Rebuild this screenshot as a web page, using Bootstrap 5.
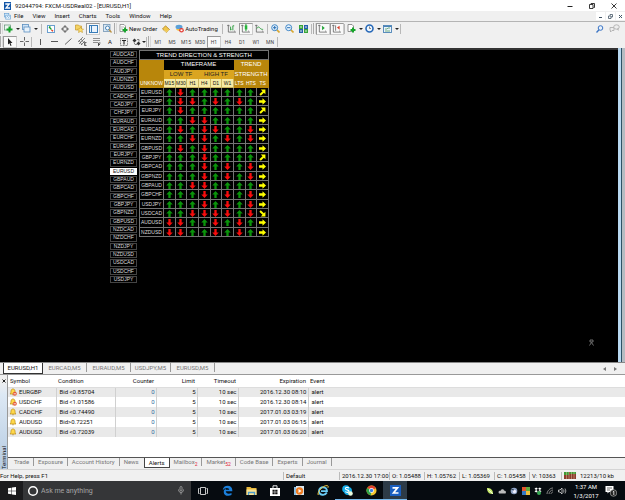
<!DOCTYPE html>
<html lang="en">
<head>
<meta charset="utf-8">
<meta name="viewport" content="width=device-width, initial-scale=1">
<title>92044794: FXCM-USDReal02 - [EURUSD,H1]</title>
<link href="https://cdn.jsdelivr.net/npm/bootstrap@5.3.0/dist/css/bootstrap.min.css" rel="stylesheet">
<style>
body{font-family:Roboto,"Liberation Sans",sans-serif;font-size:6px;line-height:8px;color:#111;background:#f0f0f0;min-height:100vh;white-space:nowrap;overflow-x:hidden}
button,input{font:inherit;color:inherit;border:0;background:none;padding:0;border-radius:0}
svg{display:block;flex:none}
a{color:inherit;text-decoration:none}
.titlebar{height:11px;background:#fff}
.menubar{height:11px;border-bottom:1px solid #b4b4b4}
.menubar nav{gap:9px;padding-left:3px}
.mdi button{width:9px;height:8px;background:#fff;margin-left:1px}
.toolrow{height:13px}
.grip{width:3px;height:11px;border-left:1px solid #aaa;border-right:1px solid #d8d8d8}
.divide{width:1px;height:10px;background:#b8b8b8;margin:0 2px}
.divide.tight{margin:0 1px 0 0}
.tool{width:14px;height:12px;display:flex;align-items:center;justify-content:center}
.tool.drop{width:18px;gap:3px}
.tool.drop.slim{width:15px;gap:1px}
.tool.worded{width:auto;padding:0 2px;gap:1px}
.tool.pressed{background:#f9f9f9;border:1px solid #ccc;border-top-color:#999;border-left-color:#999}
.tool.drop::after{content:"";border:2px solid transparent;border-top-color:#222;border-bottom:0}
.periods{color:#444;font-size:5px}
.chart{background:#000;border-top:2px solid #333;padding-left:110px;gap:2px}
.edge{width:7px;background:linear-gradient(90deg,#b8d8f0 3px,#2e5266 3px 4px,#b5bcc2 4px)}
.symbols{width:27px;height:233px;margin-top:1px;font:5px/6px "Liberation Sans",Arial,sans-serif;color:#ddd}
.symbols button{flex:1 1 0;min-height:0;background:#000;border:1px solid #444;margin-bottom:1px;line-height:5px}
.symbols button.on{background:#fff;color:#111;border-color:#fff}
.trend{width:130px;table-layout:fixed;border-collapse:collapse;font-family:"Liberation Sans",Arial,sans-serif;color:#fff;line-height:7px;text-align:center}
.trend th,.trend td{padding:0;border:1px solid #747474;font-weight:400;height:9px}
.trend tbody tr:nth-child(3n) td,.trend tbody tr:nth-child(3n) th{height:10px}
.trend tbody th{font-size:5px;color:#ddd}
.trend svg{margin:0 auto}
.trend thead tr:nth-child(2) th{height:10px}
.trend thead .plain{border-color:#000}
.trend thead .gold{background:#b8860b;border-color:#b8860b;vertical-align:bottom}
.trend thead .amber{background:#daa520;border-color:#daa520;color:#222}
.trend thead .cream{background:#f5e9a4;border-color:#c9b560;color:#111}
.trend thead .mid{vertical-align:middle}
.trend thead tr:last-child th,.trend thead .unk{font-size:5px}
.charttabs{height:13px;border-top:1px solid #888;border-bottom:1px solid #999;color:#777;padding-left:3px}
.charttabs button{width:44px;height:9px;border-right:1px solid #999}
.charttabs button.on{width:40px;height:11px;background:#fff;color:#111;border:1px solid #333;border-top:0}
.charttabs button.brief{width:40px}
.side{width:7px;background:linear-gradient(#f0f0f0 6px,#dce8f4 20px,#b6cbe2)}
.side span{writing-mode:vertical-rl;transform:rotate(180deg);line-height:7px}
.termbody{background:#fff;border-left:1px solid #999}
.alerts{table-layout:fixed;width:100%;border-collapse:collapse}
.alerts th{font-weight:400;height:12px;padding:0 2px;border-bottom:1px solid #ddd}
.alerts td{height:10px;padding:0 1px 0 3px;border-right:1px solid #d0d0d0;line-height:8px}
.alerts td:first-child{padding-left:1px}
.alerts .sym{gap:2px}
.alerts td:last-child{border-right:0}
.alerts tbody tr:nth-child(odd){background:#e9e9e9}
.alerts .zero{color:#2e6c9c}
.termtabs{height:12px;background:#f0f0f0;border-top:1px solid #555;color:#777;padding-left:2px}
.termtabs button{padding:0 4px;height:8px;border-right:1px solid #999}
.termtabs button.on{background:#fff;color:#111;border:1px solid #444;border-top:0;height:10px}
.termtabs button.bare{border-right-color:transparent}
.termtabs sub{color:#e02030;font-size:5px;bottom:-2px}
.status{height:12px;border-top:1px solid #d5d5d5}
.status span{border-left:1px solid #bbb;padding-left:2px}
.w-prof{width:56px}.w-date{width:50px}.w-px{width:35px}.w-vol{width:32px}.w-net{width:64px}
.taskbar{height:19px;background:#060b10;color:#fff}
.start{width:23px;height:19px;background:#1b1b1d}
.ask{width:168px;height:19px;background:#353638;color:#a5a5a5;font-size:7px;padding:0 7px 0 4px;gap:2px}
.ask input{min-width:0;outline:0}
.ask input::placeholder{color:#a5a5a5;opacity:1}
.app{width:24px;height:19px;display:flex;align-items:center;justify-content:center}
.app.open{border-bottom:1px solid #76b9ed}
.app.on{background:#2d3b47}
.clock{width:30px;line-height:9px}
.tray{gap:4px}
</style>
<script src="https://cdn.jsdelivr.net/npm/bootstrap@5.3.0/dist/js/bootstrap.bundle.min.js"></script>
</head>
<body class="d-flex flex-column m-0">
<svg width="0" height="0" class="position-absolute" aria-hidden="true">
<symbol id="up" viewBox="0 0 6 6"><path d="M3 0L5.800 3H4v3H2V3H.2z" fill="#0a940a"/></symbol>
<symbol id="dn" viewBox="0 0 6 6"><path d="M3 6L5.800 3H4V0H2v3H.2z" fill="#f80c0c"/></symbol>
<symbol id="rt" viewBox="0 0 6 6"><path d="M6 3L3 .2V2H0v2h3v1.800z" fill="#ff0"/></symbol>
<symbol id="ne" viewBox="0 0 6 6"><path d="M5.500.5v4L4.200 3.200 1.500 5.800.3 4.600 3 1.900 1.500.5z" fill="#ff0"/></symbol>
<symbol id="se" viewBox="0 0 6 6"><path d="M5.500 5.500v-4L4.200 2.800 1.500.2.3 1.400 3 4.100 1.500 5.500z" fill="#ff0"/></symbol>
<symbol id="bell" viewBox="0 0 8 8"><path d="M1 6c1-1 .8-1.500 1-3C2.200 1.500 3 1.200 3.500 1h1C5 1.200 5.800 1.500 6 3c.2 1.500 0 2 1 3z" fill="#ffd84a" stroke="#b98a14" stroke-width=".7"/><path d="M3 6.500h2L4 7.600z" fill="#a87910"/></symbol>
<symbol id="bars" viewBox="0 0 10 10"><path d="M1.500 1v8H9.500M0 2.500L1.500 1 3 2.500M8 7.500L9.500 9" fill="none" stroke="#666" stroke-width=".9"/></symbol>
</svg>

<header class="titlebar d-flex align-items-center">
<svg class="mx-1" width="7" height="8" viewBox="0 0 7 8"><rect width="7" height="8" fill="#1457a8"/><path d="M1.300 2h4L2 6h4" fill="none" stroke="#fff" stroke-width="1.300"/></svg>
<span>92044794: FXCM-USDReal02 - [EURUSD,H1]</span>
<div class="ms-auto d-flex pe-1">
<button class="tool me-2" aria-label="Minimize"><svg width="6" height="6"><path d="M.5 3.500h5" stroke="#222"/></svg></button>
<button class="tool me-2" aria-label="Restore"><svg width="6" height="6"><path d="M.5 1.500h3.500v4H.5zM2 1V.5h3.500v4H4.500" fill="none" stroke="#222" stroke-width=".9"/></svg></button>
<button class="tool" aria-label="Close"><svg width="6" height="6"><path d="M.5.5l5 5M5.500.5l-5 5" stroke="#222" stroke-width=".9"/></svg></button>
</div>
</header>

<div class="menubar d-flex align-items-center">
<svg class="ms-1" width="7" height="7" viewBox="0 0 8 8"><rect x=".5" y=".5" width="5" height="4" fill="#d9ecfa" stroke="#6ba4d6" stroke-width=".8"/><rect x="2" y="2.500" width="5.500" height="4.500" fill="#edf6fd" stroke="#6ba4d6" stroke-width=".8"/><path d="M3 5l1-1 1 1 1.500-1" stroke="#388bd0" fill="none" stroke-width=".7"/></svg>
<nav class="d-flex"><a href="#">File</a><a href="#">View</a><a href="#">Insert</a><a href="#">Charts</a><a href="#">Tools</a><a href="#">Window</a><a href="#">Help</a></nav>
<div class="mdi ms-auto d-flex">
<button aria-label="Minimize chart"><svg class="mx-auto" width="5" height="5"><path d="M1 3.500h3" stroke="#456"/></svg></button>
<button aria-label="Restore chart"><svg class="mx-auto" width="5" height="5"><path d="M.5 2h2.500v2.500H.5zM2 1.500V.5h2.500V3H3" fill="none" stroke="#456" stroke-width=".8"/></svg></button>
<button aria-label="Close chart"><svg class="mx-auto" width="5" height="5"><path d="M1 1l3 3M4 1L1 4" stroke="#456"/></svg></button>
</div>
</div>

<div class="toolrow d-flex align-items-center">
<i class="grip"></i>
<button class="tool drop" aria-label="New chart"><svg width="9" height="9" viewBox="0 0 9 9"><rect x=".5" y="1" width="6" height="5" fill="#eef6f0" stroke="#5d8f71" stroke-width=".7"/><path d="M5.500 2.500v6M2.500 5.500h6" stroke="#16a32a" stroke-width="2"/></svg></button>
<button class="tool drop" aria-label="Profiles"><svg width="9" height="9" viewBox="0 0 9 9"><rect x=".5" y=".5" width="6" height="5" fill="#cfe3f6" stroke="#5b8fc0" stroke-width=".8"/><rect x="2" y="3" width="6" height="5" fill="#e8f2fb" stroke="#5b8fc0" stroke-width=".8"/></svg></button>
<i class="divide"></i>
<button class="tool" aria-label="Market Watch"><svg width="8" height="8" viewBox="0 0 8 8"><rect x=".5" y=".5" width="7" height="7" fill="#fff" stroke="#6a9fcf"/><path d="M2 2l2.500 2.500M2 2h1.500" stroke="#18a030" stroke-width="1.300"/><path d="M4.500 5l1.500 1.300" stroke="#e03a20" stroke-width="1.400"/></svg></button>
<button class="tool" aria-label="Data Window"><svg width="8" height="8"><circle cx="4" cy="4" r="2.500" fill="none" stroke="#555" stroke-width=".8"/><path d="M4 0v3M4 5v3M0 4h3M5 4h3" stroke="#555" stroke-width=".8"/></svg></button>
<button class="tool" aria-label="Navigator"><svg width="9" height="9" viewBox="0 0 9 9"><path d="M.5 1h3l1 1h2v4h-6z" fill="#f4d364" stroke="#c59a2c" stroke-width=".7"/><path d="M5.500 3.200l1 1.700 2 .2-1.400 1.400.4 2-2-1-2 1 .4-2L2.500 5.100l2-.2z" fill="#ffe070" stroke="#c59a2c" stroke-width=".6"/></svg></button>
<button class="tool pressed" aria-label="Terminal"><svg width="9" height="8"><rect x=".5" y=".5" width="8" height="7" fill="#e9f3fc" stroke="#397db9"/><path d="M2.500 1v6" stroke="#397db9"/></svg></button>
<button class="tool" aria-label="Strategy Tester"><svg width="9" height="9"><rect x=".5" y=".5" width="6.500" height="7" fill="#dbe9f5" stroke="#7596b3" stroke-width=".8"/><circle cx="4.500" cy="4" r="2" fill="#fff" stroke="#4784b8"/><path d="M6 5.500L8.500 8.500" stroke="#bb9140" stroke-width="1.200"/></svg></button>
<i class="grip"></i>
<button class="tool worded"><svg width="9" height="9" viewBox="0 0 9 9"><path d="M1 .5h4l1.500 1.500v5.500H1z" fill="#fff" stroke="#777" stroke-width=".7"/><path d="M2 3h3M2 5h2" stroke="#888" stroke-width=".6"/><path d="M6 3.500v5M3.500 6h5" stroke="#16a32a" stroke-width="1.800"/></svg>New Order</button>
<button class="tool" aria-label="MetaEditor"><svg width="8" height="8"><path d="M.5 4L3.500.8l4 3.700L4.500 7.500z" fill="#f1c74c" stroke="#b38420" stroke-width=".8"/><path d="M2 5.500L4.500 7l2.500-2" stroke="#fff0b0" stroke-width=".6" fill="none"/></svg></button>
<button class="tool worded"><svg width="9" height="9"><ellipse cx="4" cy="3" rx="3.500" ry="2.300" fill="#5ba0d8"/><path d="M1 5c1 2 4 3 6 0" fill="#efc348"/><circle cx="6.500" cy="6.300" r="2.300" fill="#e3342c"/><rect x="5.500" y="5.400" width="2" height="1.800" fill="#fff"/></svg>AutoTrading</button>
<i class="divide"></i>
<button class="tool" aria-label="Bar chart"><svg width="9" height="9" viewBox="0 0 10 10"><use href="#bars"/><path d="M4 3v4M6.500 2v5M6.500 2H8M4 6h1" stroke="#239a35" fill="none"/></svg></button>
<button class="tool pressed" aria-label="Candlesticks"><svg width="9" height="9" viewBox="0 0 10 10"><use href="#bars"/><path d="M5.500 0v8" stroke="#148b28"/><rect x="4.200" y="1.500" width="2.800" height="4.500" fill="#26b53b"/></svg></button>
<button class="tool" aria-label="Line chart"><svg width="9" height="9" viewBox="0 0 10 10"><use href="#bars"/><path d="M2 5c2-3 3-1 4 0s2 1 3 1" stroke="#239a35" fill="none"/></svg></button>
<i class="divide tight"></i>
<button class="tool" aria-label="Zoom in"><svg width="9" height="9"><path d="M5.500 5.500l3 3" stroke="#d7a62e" stroke-width="1.600"/><circle cx="3.700" cy="3.700" r="3" fill="#e6f3fd" stroke="#4086c6"/><path d="M2 3.700h3.400M3.700 2v3.400" stroke="#2a6fb5"/></svg></button>
<button class="tool" aria-label="Zoom out"><svg width="9" height="9"><path d="M5.500 5.500l3 3" stroke="#d7a62e" stroke-width="1.600"/><circle cx="3.700" cy="3.700" r="3" fill="#e6f3fd" stroke="#4086c6"/><path d="M2 3.700h3.400" stroke="#2a6fb5"/></svg></button>
<button class="tool" aria-label="Tile windows"><svg width="9" height="8"><path d="M0 0h4v4H0zM5 4h4v4H5z" fill="#38a53a"/><path d="M5 0h4v4H5zM0 4h4v4H0z" fill="#275fae"/><path d="M1 2h2M6 2h2M1 6h2M6 6h2" stroke="#dff0df"/></svg></button>
<i class="divide tight"></i><i class="grip"></i>
<button class="tool pressed" aria-label="Auto scroll"><svg width="9" height="9" viewBox="0 0 10 10"><use href="#bars"/><path d="M4.500 2v5l3-2.500z" fill="#26a53b"/></svg></button>
<button class="tool pressed" aria-label="Chart shift"><svg width="9" height="9" viewBox="0 0 10 10"><use href="#bars"/><path d="M4 1.500v6" stroke="#777"/><path d="M8.500 2v4.500L5.500 4z" fill="#d8402c"/></svg></button>
<i class="divide tight"></i>
<button class="tool drop" aria-label="Indicators"><svg width="9" height="9" viewBox="0 0 9 9"><path d="M1 .5h4l1.500 1.500v5.500H1z" fill="#fff" stroke="#777" stroke-width=".8"/><path d="M6 3.500v5M3.500 6h5" stroke="#16a32a" stroke-width="2"/></svg></button>
<button class="tool drop" aria-label="Periods"><svg width="9" height="9"><circle cx="4.500" cy="4.500" r="3.500" fill="#eef6fd" stroke="#2668b8" stroke-width="1.600"/><path d="M4.500 2.500v2h1.500" fill="none" stroke="#555" stroke-width=".7"/></svg></button>
<button class="tool drop" aria-label="Templates"><svg width="9" height="8"><rect x=".5" y=".5" width="8" height="7" fill="#eaf3fb" stroke="#4b83b6" stroke-width=".9"/><path d="M.5 1.500h8" stroke="#4b83b6"/><path d="M2 4h2l1-1h2M2 6h5" stroke="#3c9151" stroke-width=".7" fill="none"/></svg></button>
<i class="divide tight"></i>
<div class="ms-auto d-flex pe-1">
<button class="tool" aria-label="Search"><svg width="8" height="8"><circle cx="4.500" cy="3" r="2.300" fill="#e8f1fb" stroke="#3b74c4"/><path d="M3 4.700L.5 7.500" stroke="#3b74c4" stroke-width="1.300"/></svg></button>
<button class="tool" aria-label="Chat"><svg width="11" height="9"><path d="M1 3.500h4v3H3L1.500 8V6.500H1z" fill="#eee" stroke="#aaa" stroke-width=".8"/><ellipse cx="7.500" cy="3" rx="2.800" ry="2.200" fill="#eee" stroke="#aaa" stroke-width=".8"/><path d="M8 5l1.500 2V4.500" fill="#aaa"/></svg></button>
</div>
</div>

<div class="toolrow d-flex align-items-center">
<i class="grip"></i>
<button class="tool pressed" aria-label="Cursor"><svg width="6" height="8"><path d="M1 0v6.500l1.500-1.300L3.500 8l1-.5-1-2.500H5.500z" fill="#222"/></svg></button>
<button class="tool" aria-label="Crosshair"><svg width="9" height="9"><path d="M4.500 0v3.500M4.500 5.500V9M0 4.500h3.500M5.500 4.500H9" stroke="#666"/></svg></button>
<i class="divide tight"></i>
<button class="tool" aria-label="Vertical line"><svg width="3" height="8"><path d="M1.500 1v6" stroke="#555"/></svg></button>
<button class="tool" aria-label="Horizontal line"><svg width="7" height="3"><path d="M0 1.500h7" stroke="#555"/></svg></button>
<button class="tool" aria-label="Trendline"><svg width="7" height="7"><path d="M0 6.500L6.500.5" stroke="#555" stroke-width=".9"/></svg></button>
<button class="tool" aria-label="Equidistant channel"><svg width="9" height="9"><path d="M0 5l5-5M1 7l6-6M3 8l4-4M1 3l3 5M3 2l3 4" stroke="#555" stroke-width=".7"/><path d="M8.500 5.500h-2v3h2M6.500 7h1.500" fill="none" stroke="#333" stroke-width=".7"/></svg></button>
<button class="tool" aria-label="Fibonacci"><svg width="9" height="9"><path d="M1 1.500h7M1 3.500h7M1 5.500h5" stroke="#777" stroke-width=".8"/><path d="M6.500 9V6h2M6.500 7.500h1.500" fill="none" stroke="#333" stroke-width=".8"/></svg></button>
<button class="tool" aria-label="Text">A</button>
<button class="tool" aria-label="Text label"><svg width="8" height="8"><rect x=".5" y=".5" width="7" height="7" fill="none" stroke="#777" stroke-dasharray="1 .6"/><path d="M2 2.500h4M4 2.500V6.500" stroke="#222" stroke-width="1.100"/></svg></button>
<button class="tool drop slim" aria-label="Arrows"><svg width="9" height="8"><path d="M2.500.5l2 2-2 2-2-2zM6.500 3.500l2 2-2 2-2-2z" fill="#333"/><path d="M2 4.500l1 2h2M5 1.500h2v2" stroke="#555" fill="none" stroke-width=".7"/></svg></button>
<i class="divide tight"></i><i class="grip"></i>
<div class="periods d-flex">
<button class="tool">M1</button><button class="tool">M5</button><button class="tool">M15</button><button class="tool">M30</button><button class="tool pressed">H1</button><button class="tool">H4</button><button class="tool">D1</button><button class="tool">W1</button><button class="tool">MN</button>
</div>
<i class="divide tight"></i>
</div>

<main class="d-flex flex-grow-1">
<div class="chart d-flex flex-grow-1 align-items-start">
<div class="symbols d-flex flex-column" id="symbols"></div>
<table class="trend">
<colgroup><col style="width:24px"><col><col><col><col><col><col><col><col><col></colgroup>
<thead>
<tr><th colspan="10">TREND DIRECTION &amp; STRENGTH</th></tr>
<tr><th class="gold unk" rowspan="3">UNKNOW</th><th class="plain" colspan="6">TIMEFRAME</th><th class="gold mid" colspan="3">TREND</th></tr>
<tr><th class="amber" colspan="3">LOW TF</th><th class="amber" colspan="3">HIGH TF</th><th class="gold mid" colspan="3">STRENGTH</th></tr>
<tr><th class="cream">M15</th><th class="cream">M30</th><th class="cream">H1</th><th class="cream">H4</th><th class="cream">D1</th><th class="cream">W1</th><th class="gold">LTS</th><th class="gold">HTS</th><th class="gold">TS</th></tr>
</thead>
<tbody id="trend"></tbody>
</table>
<svg class="ms-auto me-4 mt-auto mb-3" width="5" height="7"><path d="M.5 6.500l2-3 2 3M1 1h3v2H1z" fill="none" stroke="#888" stroke-width=".8"/></svg>
</div>
<div class="edge"></div>
</main>

<div class="charttabs d-flex">
<button class="on">EURUSD,H1</button><button>EURCAD,M5</button><button>EURAUD,M5</button><button class="brief">USDJPY,M5</button><button>EURUSD,M5</button>
<span class="ms-auto pe-2 d-flex align-items-center gap-2"><svg width="3" height="4"><path d="M3 0v4L0 2z" fill="#777"/></svg><svg width="3" height="4"><path d="M0 0v4l3-2z" fill="#777"/></svg></span>
</div>

<section class="d-flex">
<div class="side d-flex flex-column align-items-center justify-content-between pt-1"><svg width="4" height="4"><path d="M.5.5l3 3M3.500.5l-3 3" stroke="#222"/></svg><span>Terminal</span></div>
<div class="termbody flex-grow-1 d-flex flex-column">
<table class="alerts">
<colgroup><col style="width:48px"><col style="width:59px"><col style="width:41px"><col style="width:41px"><col style="width:41px"><col style="width:70px"><col></colgroup>
<thead><tr><th>Symbol</th><th>Condition</th><th class="text-end">Counter</th><th class="text-end">Limit</th><th class="text-end">Timeout</th><th class="text-end">Expiration</th><th>Event</th></tr></thead>
<tbody id="alerts"></tbody>
</table>
<div class="pt-3 mt-1"></div>
<div class="termtabs d-flex">
<button>Trade</button><button>Exposure</button><button>Account History</button><button class="bare">News</button><button class="on">Alerts</button><button>Mailbox<sub>2</sub></button><button>Market<sub>52</sub></button><button>Code Base</button><button>Experts</button><button>Journal</button>
</div>
</div>
</section>

<footer class="status d-flex align-items-center">
<div class="flex-grow-1">For Help, press F1</div>
<span class="w-prof">Default</span><span class="w-date">2016.12.30 17:00</span><span class="w-px">O: 1.05488</span><span class="w-px">H: 1.05762</span><span class="w-px">L: 1.05369</span><span class="w-px">C: 1.05458</span><span class="w-vol">V: 10363</span>
<span class="w-net d-flex align-items-center"><svg class="me-1" width="12" height="7"><rect width="12" height="7" fill="#8c3a2c"/><path d="M0 0h5v3H0zM6 0h6v2H6z" fill="#3f9a35"/><path d="M2.500 0v7M5 0v7M7.500 0v7M10 0v7" stroke="#d9c9a0" stroke-width=".5"/></svg>12213/10 kb</span>
</footer>

<div class="taskbar d-flex align-items-center">
<button class="start d-flex align-items-center justify-content-center" aria-label="Start"><svg width="8" height="8"><path d="M0 1.200L3.500.7v3H0zM4 .6L8 0v3.700H4zM0 4.200h3.500v3L0 6.800zM4 4.200h4V8L4 7.400z" fill="#fff"/></svg></button>
<label class="ask d-flex align-items-center"><svg width="12" height="12"><circle cx="6" cy="6" r="4.300" fill="none" stroke="#fff" stroke-width="1.500"/></svg><input class="flex-grow-1" type="text" placeholder="Ask me anything" aria-label="Ask me anything"><svg width="6" height="9"><rect x="2" y=".5" width="2" height="4.500" rx="1" fill="none" stroke="#aaa" stroke-width=".8"/><path d="M.5 3.500c0 4 5 4 5 0M3 6.500v2" fill="none" stroke="#aaa" stroke-width=".8"/></svg></label>
<button class="app" aria-label="Task view"><svg width="10" height="8"><path d="M2.500.5h5v7h-5zM1.500 1.500h-1v5h1M8.500 1.500h1v5h-1" fill="none" stroke="#ddd" stroke-width=".9"/></svg></button>
<button class="app" aria-label="Edge"><svg width="11" height="11" viewBox="0 0 16 16"><path d="M1 7.500C1.500 3 4.500 1 8 1c4.500 0 7 3 7 6.500V9.200H5.500c.2 3.800 5 4.300 8.300 2.300v3C9 17 2.500 15.500 2.500 10c0-2.500 1.500-4.300 3.500-5-.7.8-.7 1.700-.7 2h5.200c0-3.500-6-4-9.500.5z" fill="#1b80dc"/></svg></button>
<button class="app" aria-label="File Explorer"><svg width="11" height="10"><path d="M.5 1h4l1 1h5v7H.5z" fill="#e9b93c"/><path d="M.5 3.500h10V9H.5z" fill="#fbe494"/><path d="M2.500 9V6.500h6V9" fill="none" stroke="#4e9ccc" stroke-width="1.300"/></svg></button>
<button class="app" aria-label="Store"><svg width="10" height="11"><path d="M0 3h10v8H0z" fill="#fff"/><path d="M3 3V.8h4V3" fill="none" stroke="#fff" stroke-width=".9"/><path d="M2.500 4.800h2.200v2H2.500zM5.200 4.800h2.300v2H5.200zM2.500 7.300h2.200v2H2.500zM5.200 7.300h2.300v2H5.200z" fill="#111"/></svg></button>
<button class="app" aria-label="Media player"><svg width="11" height="10"><rect x="0" y="1" width="8" height="8" fill="#8bc0e5"/><rect x="2" y="0" width="8" height="9" fill="#d8e7f1"/><circle cx="5.500" cy="5" r="3.700" fill="#ef7c22"/><path d="M4.500 3v4l3-2z" fill="#fff"/></svg></button>
<button class="app" aria-label="Internet Explorer"><svg width="12" height="11"><path d="M9.800 7.500C8 11 2 10.500 2 6c0-5 8-5 8 .2H4" fill="none" stroke="#6acbf5" stroke-width="1.800"/><path d="M1.300 10C-.5 8 6-.5 10.500.7c1 .3.8 1.300.3 2.200" fill="none" stroke="#f3c93e" stroke-width="1"/></svg></button>
<button class="app open" aria-label="Skype"><svg width="11" height="11"><circle cx="4" cy="4" r="3.800" fill="#16aeea"/><circle cx="6" cy="6" r="4" fill="#16aeea"/><path d="M7 3C5 1.800 3 2.700 3.500 4c.5 1 3.500.8 3.500 2.200 0 1.500-2.500 1.500-3.700.5" fill="none" stroke="#fff" stroke-width="1.100"/><circle cx="8.500" cy="8.500" r="2.300" fill="#e9fadd"/></svg></button>
<button class="app open" aria-label="Chrome"><svg width="11" height="11"><circle cx="5.500" cy="5.500" r="5" fill="#f6c732"/><path d="M5.500 5.500L1.200 3A5 5 0 0 1 10 3.200z" fill="#e2402e"/><path d="M5.500 5.500L1.200 3a5 5 0 0 0 3.500 7.400z" fill="#2da54b"/><circle cx="5.500" cy="5.500" r="2.400" fill="#fff"/><circle cx="5.500" cy="5.500" r="1.700" fill="#3d7fe4"/></svg></button>
<button class="app on open" aria-label="Trading terminal"><svg width="11" height="11"><rect width="11" height="11" fill="#1a5fc0"/><path d="M2.500 2.800h5L3.500 8h5" fill="none" stroke="#fff" stroke-width="1.700"/></svg></button>
<div class="tray ms-auto d-flex align-items-center">
<svg width="8" height="8"><path d="M1 1c3 0 6 1 6 6-3 0-6-1-6-6z" fill="#c9ec6c"/><path d="M2 2l5 5" stroke="#fff" stroke-width=".7"/></svg>
<svg width="8" height="8"><path d="M1 6.500C-.5 4.500 2 3.500 2.500 4 3 1.500 6 2 6 3.500c2 0 2.300 2 1.500 3z" fill="#bbb"/></svg>
<svg width="8" height="8"><circle cx="4" cy="4" r="3.300" fill="#8fa3c5"/><circle cx="4.500" cy="4.500" r="1.700" fill="#eef"/><path d="M1 2l3 1" stroke="#345"/></svg>
<svg width="8" height="8"><path d="M0 0h4v4H0z" fill="#e3552c"/><path d="M4 0h4v4H4z" fill="#62ac3f"/><path d="M0 4h4v4H0z" fill="#3579c5"/><path d="M4 4h4v4H4z" fill="#eec03c"/></svg>
<svg width="8" height="8"><path d="M2.200.5l1.700 1.300-1.800 1.200L.5 1.800zM5.800.5L4.100 1.800l1.800 1.200 1.600-1.200zM.5 4.200L2.200 3l1.700 1.300-1.700 1.200zM7.500 4.200L5.800 3 4.100 4.300l1.700 1.200z" fill="#fff"/><circle cx="5" cy="6" r="2" fill="#35a852"/></svg>
<svg width="8" height="8"><path d="M1 7c0-3 3-6 6-6M3 7c0-2 2-4 4-4M5 7c0-1 1-2 2-2" fill="none" stroke="#888"/></svg>
<svg width="9" height="8"><path d="M.5 3h1.500L4 1v6L2 5H.5z" fill="none" stroke="#ddd" stroke-width=".8"/><path d="M5.500 2.500q1 1.500 0 3M7 1.500q1.800 2.500 0 5" fill="none" stroke="#ddd" stroke-width=".7"/></svg>
<div class="clock text-center">1:37 AM<br>1/3/2017</div>
<svg class="me-2" width="12" height="12"><path d="M.5 1h8v6H4L2.500 8.500V7h-2z" fill="#fff"/><path d="M2 3h5M2 5h3" stroke="#333" stroke-width=".7"/><circle cx="8.500" cy="8" r="3.300" fill="#222" stroke="#aaa" stroke-width=".7"/><path d="M7.800 7l1-.7V10" fill="none" stroke="#fff" stroke-width=".8"/></svg>
</div>
</div>

<script>
const symbols = "AUDCAD AUDCHF AUDJPY AUDNZD AUDUSD CADCHF CADJPY CHFJPY EURAUD EURCAD EURCHF EURGBP EURJPY EURNZD EURUSD GBPAUD GBPCAD GBPCHF GBPJPY GBPNZD GBPUSD NZDCAD NZDCHF NZDJPY NZDUSD USDCAD USDCHF USDJPY".split(" ");
document.getElementById("symbols").innerHTML = symbols.map(s => `<button${s === "EURUSD" ? ' class="on"' : ""}>${s}</button>`).join("");

const icon = {u: "up", d: "dn", r: "rt", n: "ne", s: "se"};
const trend = {
  EURUSD: "uduuuuuun", EURGBP: "uddududur", EURJPY: "uduuuuuun", EURAUD: "uudduuuur",
  EURCAD: "ududduudr", EURNZD: "uuddududr", GBPUSD: "ududuuuur", GBPJPY: "uuuduuuun",
  GBPCAD: "uuudududr", GBPNZD: "uuudududr", GBPAUD: "uudduuuur", GBPCHF: "uuudududr",
  USDJPY: "uuudududr", USDCAD: "uudddduds", AUDUSD: "dduududur", NZDUSD: "dduududur"
};
document.getElementById("trend").innerHTML = Object.entries(trend).map(([s, row]) =>
  `<tr><th>${s}</th>${[...row].map(c => `<td><svg width="7" height="7"><use href="#${icon[c]}"/></svg></td>`).join("")}</tr>`).join("");

const alerts = [
  ["EURGBP", "Bid <0.85704", "2016.12.30 08:10", 1],
  ["USDCHF", "Bid <1.01586", "2016.12.30 08:14", 1],
  ["CADCHF", "Bid <0.74490", "2017.01.03 03:19", 0],
  ["AUDUSD", "Bid>0.72251", "2017.01.03 06:15", 0],
  ["AUDUSD", "Bid <0.72039", "2017.01.03 06:20", 0]
];
document.getElementById("alerts").innerHTML = alerts.map(([s, c, e, off]) =>
  `<tr><td><span class="sym d-flex align-items-center"><svg width="8" height="8" viewBox="0 0 8 8"><use href="#bell"/>${off ? '<circle cx="5.800" cy="5.800" r="2" fill="#e4573a"/><path d="M4.600 5.800h2.400" stroke="#fff" stroke-width=".8"/>' : ""}</svg>${s}</span></td><td>${c.replace("<", "&lt;")}</td><td class="text-end zero">0</td><td class="text-end">5</td><td class="text-end">10 sec</td><td class="text-end">${e}</td><td>alert</td></tr>`).join("");
</script>
</body>
</html>
